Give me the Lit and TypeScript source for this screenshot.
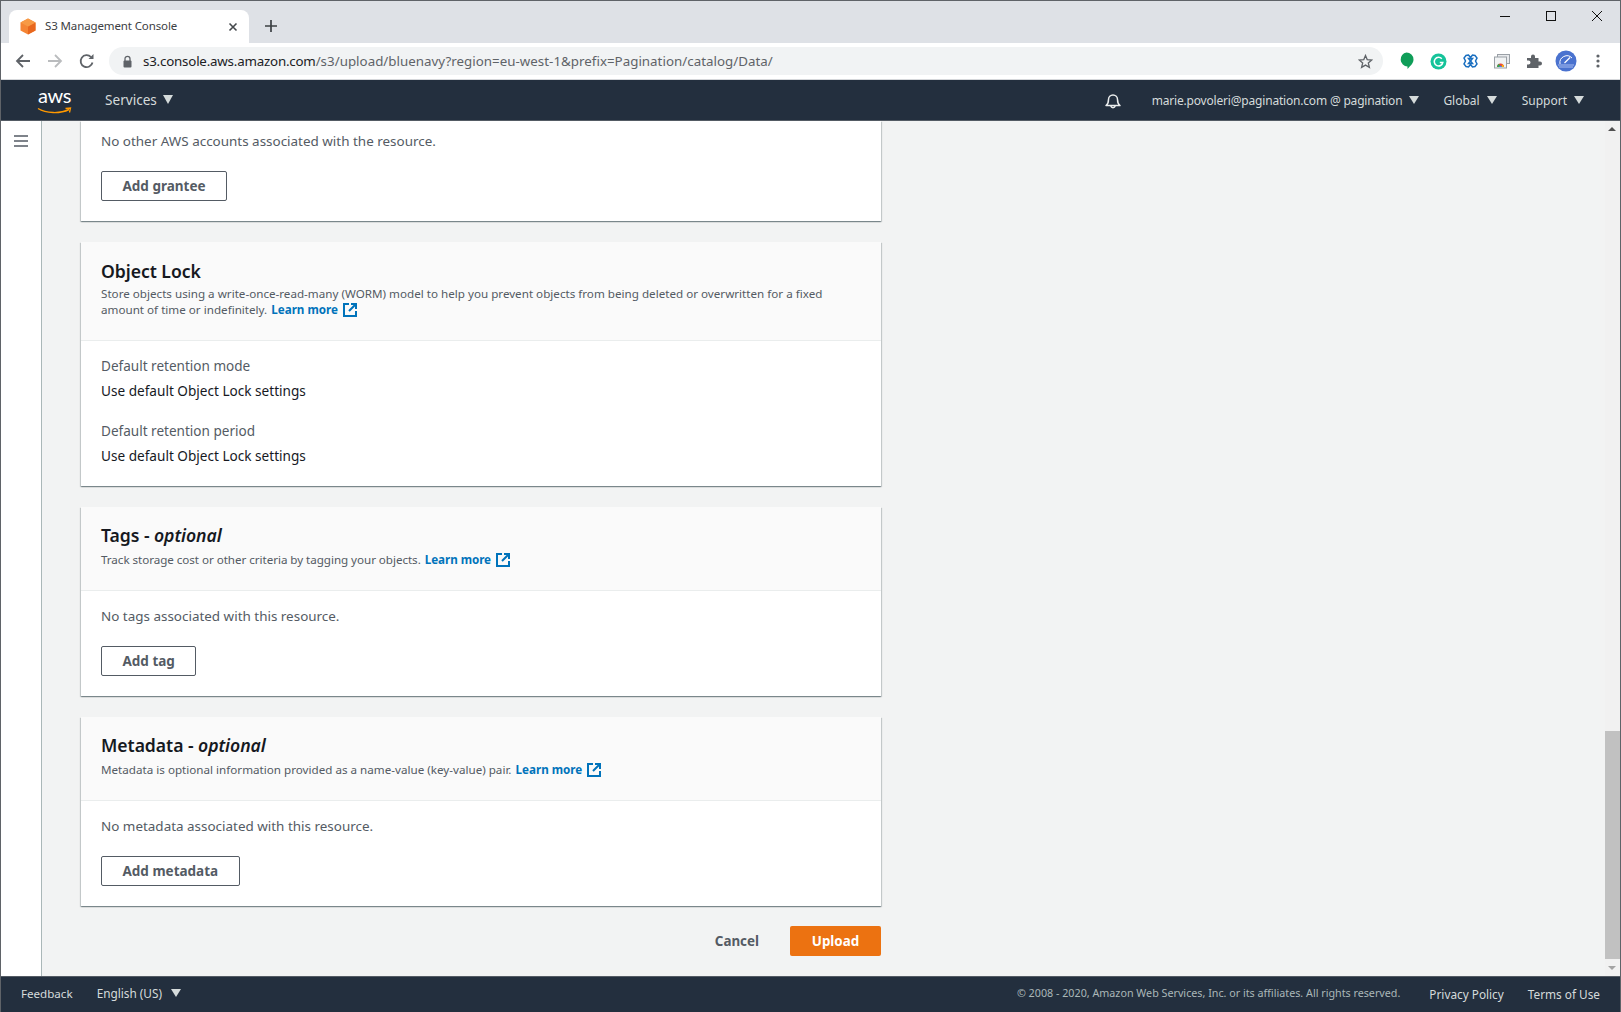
import { LitElement, html, css } from "lit";
import { customElement } from "lit/decorators.js";

const ext = html`<svg class="ext" width="14" height="14" viewBox="0 0 14 14"><path d="M6 1H1V13H13V8" fill="none" stroke="#0073bb" stroke-width="2"/><path d="M8 1H13V6M12.500 1.500L6 8" fill="none" stroke="#0073bb" stroke-width="2"/></svg>`;
const tri = html`<i class="tri"></i>`;

@customElement("app-root")
export class AppRoot extends LitElement {
  static styles = css`
    :host { display: block; width: 1621px; height: 1012px; overflow: hidden; font-family: "Noto Sans", sans-serif; color: #545b64; background: #fff; }
    * { box-sizing: border-box; }
    .win { width: 1621px; height: 1012px; display: flex; flex-direction: column; border-top: 1px solid #5f6368; border-left: 1px solid #5f6368; border-right: 1px solid #5f6368; }
    .tabstrip { height: 42px; background: #dee1e6; display: flex; align-items: flex-end; padding-left: 8px; flex: none; }
    .tab { width: 240px; height: 33px; background: #fff; border-radius: 8px 8px 0 0; display: flex; align-items: center; padding: 0 11px 0 11px; font-size: 11.5px; color: #3c4043; }
    .tab .title { margin: 0 0 2px 9px; flex: 1; letter-spacing: -.12px; }
    .newtab { margin: 0 0 11px 16px; }
    .winbtns { margin-left: auto; align-self: flex-start; display: flex; gap: 34px; padding: 9px 17px 0 0; }
    .toolbar { height: 37px; flex: none; display: flex; align-items: center; border-bottom: 1px solid #d5d7da; background: #fff; padding-left: 14px; }
    .navs { display: flex; gap: 10px; align-items: center; width: 94px; }
    .omni { width: 1274px; height: 28px; border-radius: 14px; background: #f1f3f4; display: flex; align-items: center; padding-left: 13px; font-size: 13.33px; color: #5f6368; letter-spacing: .02px; flex: none; }
    .omni b { font-weight: 400; color: #202124; letter-spacing: -.2px; }
    .omni svg.lock { margin-right: 10px; }
    .omni .star { margin-left: auto; margin-right: 10px; }
    .exts { display: flex; align-items: center; margin-left: 7px; }
    .slot { width: 32px; display: flex; align-items: center; justify-content: center; }
    .exts svg { display: block; }
    .nav { height: 41px; flex: none; background: #232f3e; border-bottom: 1px solid #545b64; display: flex; align-items: center; color: #d5dbdb; font-size: 12px; }
    .logo { width: 35px; margin-left: 36px; position: relative; height: 30px; color: #fff; font-family: Lato, sans-serif; font-size: 20px; line-height: 20px; text-align: center; letter-spacing: -.4px; }
    .logo svg { position: absolute; left: 0; top: 22px; }
    .svc { margin-left: 33px; padding-bottom: 1px; font-size: 13.6px; display: flex; align-items: center; gap: 6px; }
    .right { margin-left: auto; display: flex; align-items: center; }
    .right .item { display: flex; align-items: center; gap: 7px; }
    .bell { position: relative; top: 1px; }
    .i-email { margin-left: 30px; }
    .i-global { margin-left: 24px; }
    .i-support { margin-left: 25px; margin-right: 36px; }
    .email { letter-spacing: -.19px; }
    .tri { display: inline-block; width: 0; height: 0; border-left: 5px solid transparent; border-right: 5px solid transparent; border-top: 8px solid #d5dbdb; }
    .svc .tri { border-left-width: 5.5px; border-right-width: 5.5px; border-top-width: 9px; }
    .main { flex: 1; min-height: 0; display: flex; background: #f2f3f3; overflow: hidden; }
    .side { width: 41px; flex: none; background: #fff; border-right: 1px solid #aab7b8; padding: 9px 0 0 13px; }
    .content { width: 841px; flex: none; padding-left: 39px; display: flex; flex-direction: column; }
    .card { background: #fff; width: 800px; box-shadow: 0 1px 1px 0 rgba(0,28,36,.3), 1px 1px 1px 0 rgba(0,28,36,.15), -1px 1px 1px 0 rgba(0,28,36,.15); margin-bottom: 21px; flex: none; }
    .card.first { height: 100px; padding: 10px 20px 0; }
    .hd { background: #fafafa; border-bottom: 1px solid #eaeded; padding: 16px 20px 0; }
    .hd.two { height: 99px; padding-top: 17px; }
    .hd.one { height: 84px; }
    h2 { margin: 0; font-size: 17.6px; line-height: 24px; font-weight: 600; color: #16191f; letter-spacing: -.05px; }
    h2 em { font-style: italic; }
    .desc { font-size: 11.65px; line-height: 16px; color: #545b64; margin-top: 3px; }
    .hd.one .desc { margin-top: 5px; }
    .desc.tight { letter-spacing: -.05px; }
    .desc a { color: #0073bb; font-weight: 700; margin-left: 1px; }
    .ext { vertical-align: -3px; margin-left: 5px; }
    .bd { padding: 15px 20px 0; font-size: 13.55px; line-height: 20px; }
    .bd p { margin: 0; }
    .bd .msg { height: 40px; font-size: 13.45px; }
    .btn { display: inline-flex; align-items: center; justify-content: center; height: 30px; border: 1px solid #545b64; border-radius: 2px; background: #fff; font-size: 13.5px; font-weight: 700; color: #545b64; padding: 0 20.5px; vertical-align: top; }
    .filler { height: 20px; }
    .bd .lbl { margin-bottom: 5px; }
    .bd .val { color: #16191f; margin-bottom: 20px; font-size: 13.6px; }
    .bd .val.last { margin: 0; height: 40px; }
    .actions { display: flex; justify-content: flex-end; align-items: center; width: 800px; gap: 31px; margin-top: -1px; }
    .cancel { font-size: 13.4px; font-weight: 700; color: #545b64; }
    .upload { width: 91px; height: 30px; border-radius: 2px; background: #ec7211; color: #fff; font-size: 13.4px; font-weight: 700; display: flex; align-items: center; justify-content: center; }
    .scroller { margin-left: auto; width: 15px; flex: none; background: #f1f1f1; position: relative; }
    .thumb { position: absolute; left: 0; right: 0; top: 610px; height: 228px; background: #c1c1c1; }
    .up, .down { position: absolute; left: 3px; width: 0; height: 0; border-left: 4px solid transparent; border-right: 4px solid transparent; }
    .up { top: 6px; border-bottom: 4px solid #505050; }
    .down { bottom: 6px; border-top: 4px solid #a3a3a3; }
    .footer { height: 36px; flex: none; background: #232f3e; border-top: 1px solid #545b64; display: flex; align-items: center; color: #d5dbdb; font-size: 11.6px; padding: 0 20px 2px 20px; }
    .lang { margin-left: 24px; font-size: 11.8px; display: flex; align-items: center; gap: 9px; position: relative; top: -1px; }
    .copy { margin-left: auto; color: #aab7b8; font-size: 10.74px; position: relative; top: -1px; }
    .flink { margin-left: 29px; font-size: 11.8px; }
    .flink2 { margin-left: 24px; font-size: 11.8px; }
  `;

  private card(title: any, desc: any, body: any, head = "one", descClass = "") {
    return html`<section class="card">
      <div class="hd ${head}"><h2>${title}</h2><div class="desc ${descClass}">${desc}</div></div>
      <div class="bd">${body}</div>
    </section>`;
  }

  render() {
    return html`<div class="win">
      <div class="tabstrip">
        <div class="tab">
          <svg width="16" height="17" viewBox="0 0 16 17"><path d="M8 0.5L15.5 4.5V12.5L8 16.5L0.5 12.5V4.5Z" fill="#f58534"/><path d="M8 8.5L15.5 4.5V12.5L8 16.5Z" fill="#e8671e"/><path d="M8 0.5L15.5 4.5L8 8.5L0.5 4.5Z" fill="#f79a45"/></svg>
          <span class="title">S3 Management Console</span>
          <svg width="10" height="10" viewBox="0 0 10 10"><path d="M1.5 1.5L8.5 8.5M8.5 1.5L1.5 8.5" stroke="#45494d" stroke-width="1.6"/></svg>
        </div>
        <svg class="newtab" width="12" height="12" viewBox="0 0 12 12"><path d="M6 0V12M0 6H12" stroke="#3c4043" stroke-width="1.7"/></svg>
        <div class="winbtns">
          <svg width="12" height="12" viewBox="0 0 12 12"><path d="M1 6.500H11" stroke="#111" stroke-width="1"/></svg>
          <svg width="12" height="12" viewBox="0 0 12 12"><rect x="1.500" y="1.500" width="9" height="9" fill="none" stroke="#111" stroke-width="1"/></svg>
          <svg width="12" height="12" viewBox="0 0 12 12"><path d="M1 1L11 11M11 1L1 11" stroke="#111" stroke-width="1"/></svg>
        </div>
      </div>
      <div class="toolbar">
        <div class="navs">
          <svg width="16" height="16" viewBox="0 0 16 16"><path d="M15 8H2M8 2L2 8L8 14" fill="none" stroke="#5f6368" stroke-width="1.8"/></svg>
          <svg style="margin-left:6px" width="16" height="16" viewBox="0 0 16 16"><path d="M1 8H14M8 2L14 8L8 14" fill="none" stroke="#babcbe" stroke-width="1.8"/></svg>
          <svg style="margin-left:6px" width="16" height="16" viewBox="0 0 16 16"><path d="M13.500 9.500A6 6 0 1 1 12 4" fill="none" stroke="#5f6368" stroke-width="1.8"/><path d="M9.500 6H14.500V1Z" fill="#5f6368"/></svg>
        </div>
        <div class="omni">
          <svg class="lock" width="11" height="13" viewBox="0 0 11 13"><path d="M3 6V3.800a2.500 2.500 0 0 1 5 0V6" fill="none" stroke="#5f6368" stroke-width="1.3"/><rect x="1.500" y="5.500" width="8" height="7" rx="1" fill="#5f6368"/></svg>
          <span><b>s3.console.aws.amazon.com</b>/s3/upload/bluenavy?region=eu-west-1&amp;prefix=Pagination/catalog/Data/</span>
          <svg class="star" width="15" height="15" viewBox="0 0 15 15"><path d="M7.500 1.500L9.200 5.600L13.800 6L10.300 9L11.400 13.400L7.500 11.100L3.600 13.400L4.700 9L1.200 6L5.800 5.600Z" fill="none" stroke="#5f6368" stroke-width="1.3"/></svg>
        </div>
        <div class="exts">
          <div class="slot"><svg width="15" height="18" viewBox="0 0 15 18"><path d="M7.500 .5a7 7 0 0 1 7 7c0 4-3.500 6.500-6 9.500v-2.600a7 7 0 0 1-1-13.900Z" fill="#0f9d58"/></svg></div>
          <div class="slot"><svg width="17" height="17" viewBox="0 0 17 17"><circle cx="8.500" cy="8.500" r="8" fill="#15c39a"/><path d="M11.800 5.800A4.300 4.300 0 1 0 12.800 9.500H9.800" fill="none" stroke="#fff" stroke-width="1.500"/></svg></div>
          <div class="slot"><svg width="15" height="14" viewBox="0 0 15 14"><path d="M5.500 1L3 1.500L1 4L2.500 7L1 10L3 12.500L5.500 13L7.500 10.500L9.500 13L12 12.500L14 10L12.500 7L14 4L12 1.500L9.500 1L7.500 3.500Z M5.500 4.500H9.500L7.500 7L9.500 9.500H5.500L7.500 7Z" fill="none" stroke="#1a6fc0" stroke-width="1.500"/></svg></div>
          <div class="slot"><svg width="16" height="15" viewBox="0 0 16 15"><rect x="3.500" y=".5" width="12" height="9" fill="#e8eaed" stroke="#9aa0a6"/><rect x=".5" y="3" width="12" height="11" fill="#f1f3f4" stroke="#9aa0a6"/><path d="M3 13a3.500 3.500 0 0 1 7 0Z" fill="#ea4335"/><path d="M3 13a3.500 3.500 0 0 1 2-3.200L6.500 13Z" fill="#34a853"/><path d="M7.800 10.200a3.500 3.500 0 0 1 2.200 2.800H7.800Z" fill="#fbbc05"/><path d="M5.200 13a1.300 1.300 0 0 1 2.600 0Z" fill="#4285f4"/></svg></div>
          <div class="slot"><svg width="16" height="16" viewBox="0 0 16 16"><path d="M1 5H5V3.500a2 2 0 0 1 4 0V5H12.500V8.500H14a2 2 0 0 1 0 4H12.500V15H1V11.500H2.500a2 2 0 0 0 0-4H1Z" fill="#5f6368"/></svg></div>
          <div class="slot"><svg width="22" height="22" viewBox="0 0 22 22"><circle cx="11" cy="11" r="10.500" fill="#4a72cf"/><path d="M5 14a7 7 0 0 1 12-6" fill="none" stroke="#fff" stroke-width="1"/><path d="M9.500 13L15 7.500" stroke="#fff" stroke-width="1.200"/><path d="M3 15H19M4 17H18" stroke="#a9bdf0" stroke-width="1"/></svg></div>
          <div class="slot"><svg width="4" height="14" viewBox="0 0 4 14"><circle cx="2" cy="2" r="1.600" fill="#5f6368"/><circle cx="2" cy="7" r="1.600" fill="#5f6368"/><circle cx="2" cy="12" r="1.600" fill="#5f6368"/></svg></div>
        </div>
      </div>
      <header class="nav">
        <div class="logo">aws<svg width="35" height="8" viewBox="0 0 35 8"><path d="M1 1.500C9 6.500 23 7 32 2.500" fill="none" stroke="#f90" stroke-width="1.400"/><path d="M28.500 1.500L33.500 1L32.500 5.500" fill="none" stroke="#f90" stroke-width="1.300"/></svg></div>
        <div class="svc">Services ${tri}</div>
        <div class="right">
          <svg class="bell" width="18" height="18" viewBox="0 0 18 18"><path d="M2 13.500C4 12 4.500 10 4.500 7.500a4.500 4.500 0 0 1 9 0C13.500 10 14 12 16 13.500Z" fill="none" stroke="#eaeded" stroke-width="1.500" stroke-linejoin="round"/><path d="M6.800 14a2.300 2.300 0 0 0 4.400 0" fill="none" stroke="#eaeded" stroke-width="1.500"/></svg>
          <span class="item i-email"><span class="email">marie.povoleri@pagination.com @ pagination</span> ${tri}</span>
          <span class="item i-global">Global ${tri}</span>
          <span class="item i-support">Support ${tri}</span>
        </div>
      </header>
      <div class="main">
        <div class="side"><svg width="14" height="12" viewBox="0 0 14 12"><path d="M0 1H14M0 6H14M0 11H14" stroke="#545b64" stroke-width="1.600"/></svg></div>
        <div class="content">
          <section class="card first">
            <div class="bd" style="padding:0"><p class="msg">No other AWS accounts associated with the resource.</p><span class="btn">Add grantee</span></div>
          </section>
          ${this.card("Object Lock", html`Store objects using a write-once-read-many (WORM) model to help you prevent objects from being deleted or overwritten for a fixed amount of time or indefinitely. <a>Learn more</a>${ext}`,
            html`<p class="lbl">Default retention mode</p><p class="val">Use default Object Lock settings</p><p class="lbl">Default retention period</p><p class="val last">Use default Object Lock settings</p>`, "two")}
          ${this.card(html`Tags - <em>optional</em>`, html`Track storage cost or other criteria by tagging your objects. <a>Learn more</a>${ext}`,
            html`<p class="msg">No tags associated with this resource.</p><span class="btn">Add tag</span><div class="filler"></div>`, "one", "tight")}
          ${this.card(html`Metadata - <em>optional</em>`, html`Metadata is optional information provided as a name-value (key-value) pair. <a>Learn more</a>${ext}`,
            html`<p class="msg">No metadata associated with this resource.</p><span class="btn">Add metadata</span><div class="filler"></div>`)}
          <div class="actions"><span class="cancel">Cancel</span><span class="upload">Upload</span></div>
        </div>
        <div class="scroller"><i class="up"></i><div class="thumb"></div><i class="down"></i></div>
      </div>
      <footer class="footer">
        <span>Feedback</span>
        <span class="lang">English (US) ${tri}</span>
        <span class="copy">© 2008 - 2020, Amazon Web Services, Inc. or its affiliates. All rights reserved.</span>
        <span class="flink">Privacy Policy</span>
        <span class="flink2">Terms of Use</span>
      </footer>
    </div>`;
  }
}
